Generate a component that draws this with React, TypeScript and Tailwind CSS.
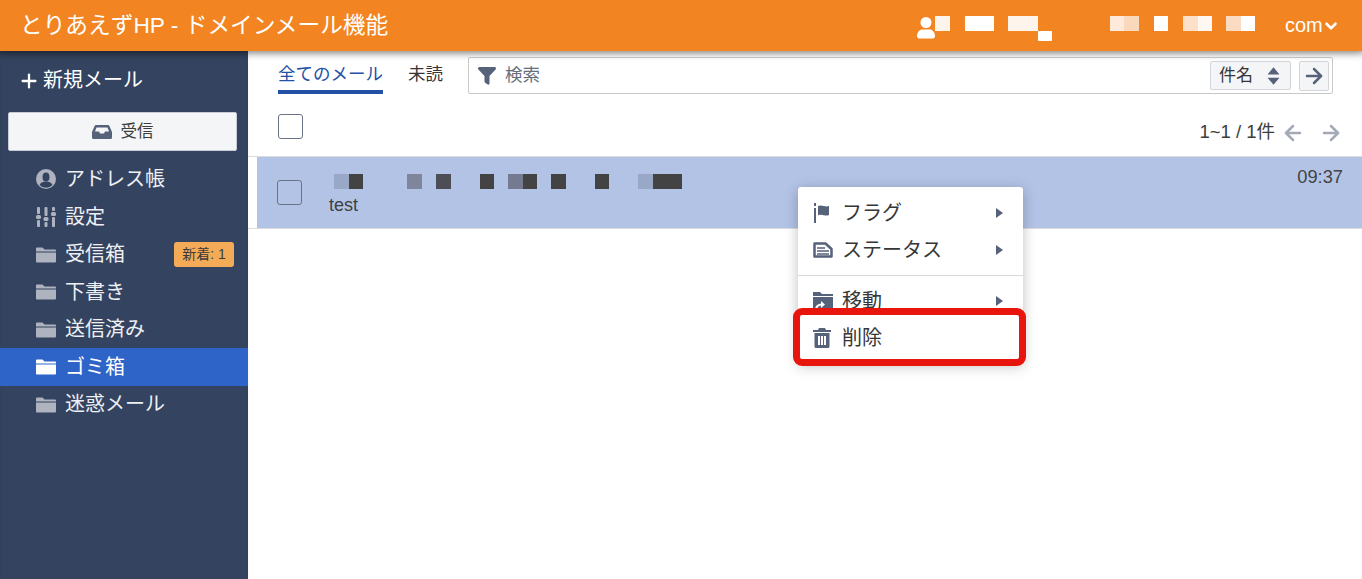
import { Plus, ChevronDown, ArrowRight, ArrowLeft } from 'lucide-react';

const font = { fontFamily: '"Liberation Sans", "Noto Sans CJK JP", sans-serif' };

// pixelated (censored) text blocks
const Cell = ({ c, w = 'w-[14.5px]' }: { c: string; w?: string }) => <span className={`block h-[15px] ${w} ${c}`} />;

const FolderIcon = ({ active }: { active?: boolean }) => (
  <svg viewBox="0 0 20 16" className="h-[17px] w-[20px]" fill={active ? '#ffffff' : '#aeb3bf'}>
    <path d="M0 2a1 1 0 0 1 1-1h5.500l2 2H19a1 1 0 0 1 1 1v1H0z" />
    <path d="M0 6h20v9a1 1 0 0 1-1 1H1a1 1 0 0 1-1-1z" />
  </svg>
);

const AddressIcon = () => (
  <svg viewBox="0 0 20 20" className="h-[20px] w-[20px]">
    <circle cx="10" cy="10" r="10" fill="#aeb3bf" />
    <ellipse cx="10" cy="8" rx="3.500" ry="4.500" fill="#34435f" />
    <path d="M3.500 16c1-2.500 3.500-3.500 6.500-3.500s5.500 1 6.500 3.500a9 9 0 0 1-13 0z" fill="#34435f" />
  </svg>
);

const SlidersIcon = () => (
  <svg viewBox="0 0 20 20" className="h-[20px] w-[20px]" fill="#aeb3bf">
    <rect x="1" y="0" width="3" height="7" rx="1" />
    <rect x="0" y="8" width="5" height="4" rx="1.500" />
    <rect x="1" y="13" width="3" height="7" rx="1" />
    <rect x="8.500" y="0" width="3" height="9" rx="1" />
    <rect x="7.500" y="10" width="5" height="4" rx="1.500" />
    <rect x="8.500" y="15" width="3" height="5" rx="1" />
    <rect x="16" y="0" width="3" height="4" rx="1" />
    <rect x="15" y="5" width="5" height="4" rx="1.500" />
    <rect x="16" y="10" width="3" height="10" rx="1" />
  </svg>
);

const SideRow = ({ icon, label, active, badge }: { icon: React.ReactNode; label: string; active?: boolean; badge?: string }) => (
  <div className={`flex h-[37.5px] items-center pl-[36px] pr-[14px] text-[20px] ${active ? 'bg-[#2e64c8] text-white' : 'text-[#eef0f4]'}`}>
    <span className="flex w-[29px] shrink-0">{icon}</span>
    <span className="flex-1 whitespace-nowrap">{label}</span>
    {badge && <span className="flex h-[25px] w-[60px] items-center justify-center rounded-[3px] bg-[#f4ab58] text-[14px] text-[#3b3b3b]">{badge}</span>}
  </div>
);

const MenuItem = ({ icon, label, arrow = true }: { icon: React.ReactNode; label: string; arrow?: boolean }) => (
  <div className="flex h-[37.5px] items-center pl-[15px] pr-[20px] text-[20px] text-[#363636]">
    <span className="flex w-[29px] shrink-0">{icon}</span>
    <span className="flex-1">{label}</span>
    {arrow && <span className="h-0 w-0 border-y-[5px] border-l-[7px] border-y-transparent border-l-[#56617a]" />}
  </div>
);

export default function App() {
  return (
    <div className="flex h-[579px] w-[1362px] flex-col overflow-hidden bg-white" style={font}>
      <header className="relative z-10 flex h-[51px] shrink-0 items-center bg-[#f28522] pl-[20px] text-white shadow-[0_2px_8px_rgba(0,0,0,0.3)]">
        <h1 className="w-[897px] whitespace-nowrap text-[22.700px]">とりあえずHP - ドメインメール機能</h1>
        <svg viewBox="0 0 18 22" className="mt-[4px] h-[22px] w-[18px]" fill="#ffffff">
          <circle cx="9" cy="5.500" r="5.500" />
          <path d="M0 19c0-4 3-6.500 5-6.500h8c2 0 5 2.500 5 6.500 0 1.500-1 2.500-2 2.500H2c-1 0-2-1-2-2.500z" />
        </svg>
        <div className="mb-[4px] flex">
          <Cell c="bg-[#fef4ec]" />
          <Cell c="ml-[15px] bg-white" w="w-[29px]" />
          <div className="relative ml-[14px]">
            <Cell c="bg-[#fef4ec]" w="w-[30px]" />
            <span className="absolute left-[30px] top-[15px] block h-[10px] w-[14px] bg-white" />
          </div>
          <Cell c="ml-[72px] bg-[#fdeadb]" />
          <Cell c="bg-[#fad8bb]" />
          <Cell c="ml-[15px] bg-white" />
          <Cell c="ml-[15px] bg-[#fce0c8]" />
          <Cell c="bg-[#fff8f2]" />
          <Cell c="ml-[14px] bg-[#fbdcc2]" />
          <Cell c="bg-white" />
        </div>
        <span className="mb-[2px] ml-[30px] text-[20px]">com</span>
        <ChevronDown className="-ml-[1px] mt-[1px] h-[18px] w-[18px]" strokeWidth={3.500} />
      </header>

      <div className="relative flex flex-1">
        <aside className="flex w-[248px] shrink-0 flex-col bg-[#34435f] shadow-[inset_0_6px_6px_-4px_rgba(0,0,0,0.3)]">
          <div className="flex h-[61px] items-center pb-[4px] pl-[18px] text-[20px] text-white">
            <Plus className="mr-[3px] mt-[3px] h-[22px] w-[22px]" strokeWidth={2.500} />
            新規メール
          </div>
          <button className="mx-[8px] flex h-[39px] w-[229px] items-center justify-center rounded-[2px] border border-[#c8ccd4] bg-[#f4f5f7] text-[16.500px] text-[#3e3e3e]">
            <svg viewBox="0 0 20 14" className="mr-[9px] h-[14px] w-[20px]" fill="#56617a">
              <path d="M4 0h12a1.500 1.500 0 0 1 1.400 1L20 7v5.500a1.500 1.500 0 0 1-1.500 1.500h-17A1.500 1.500 0 0 1 0 12.500V7l2.600-6A1.500 1.500 0 0 1 4 0zM4.500 2.500 3 6.500h4l1 2h4l1-2h4l-1.500-4z" fillRule="evenodd" />
            </svg>
            受信
          </button>
          <nav className="mt-[9.500px]">
            <SideRow icon={<AddressIcon />} label="アドレス帳" />
            <SideRow icon={<SlidersIcon />} label="設定" />
            <SideRow icon={<FolderIcon />} label="受信箱" badge="新着: 1" />
            <SideRow icon={<FolderIcon />} label="下書き" />
            <SideRow icon={<FolderIcon />} label="送信済み" />
            <SideRow icon={<FolderIcon active />} label="ゴミ箱" active />
            <SideRow icon={<FolderIcon />} label="迷惑メール" />
          </nav>
        </aside>

        <main className="flex min-w-0 flex-1 flex-col shadow-[inset_0_6px_6px_-4px_rgba(0,0,0,0.25)]">
          <div className="flex h-[43px] items-end pl-[30px] pr-[29px]">
            <div className="flex h-[37px] w-[105px] items-center justify-center whitespace-nowrap border-b-[4px] border-[#2450a6] pt-[2px] text-[17.500px] text-[#2450a6]">全てのメール</div>
            <div className="ml-[25px] flex h-[37px] items-center pb-[2px] text-[17.500px] text-[#363636]">未読</div>
            <div className="ml-[25px] flex h-[37px] flex-1 items-center rounded-[2px] border border-[#c9c9c9] pl-[9px] pr-[3px]">
              <svg viewBox="0 0 18 18" className="h-[18px] w-[18px]" fill="#56617a">
                <path d="M0 1.500C0 .7.700 0 1.500 0h15c.8 0 1.500.7 1.500 1.500 0 .4-.2.8-.4 1L11.500 9v7.500c0 1-1 1.500-1.800 1l-2.500-1.800c-.4-.3-.7-.7-.7-1.200V9L.4 2.500C.2 2.300 0 1.900 0 1.500z" />
              </svg>
              <span className="ml-[9px] flex-1 text-[17.500px] text-[#666e7d]">検索</span>
              <div className="flex h-[29px] w-[81px] items-center justify-between rounded-[2px] border border-[#d2d5da] bg-[#f4f5f7] pl-[8px] pr-[10px] text-[17px] text-[#363636]">
                件名
                <svg viewBox="0 0 12 16" className="h-[18px] w-[13px]" fill="#56617a">
                  <path d="M6 0l5.500 6.500H.5zM6 16L.5 9.500h11z" />
                </svg>
              </div>
              <div className="ml-[8px] flex h-[30px] w-[30px] items-center justify-center rounded-[2px] border border-[#d2d5da] bg-[#f4f5f7]">
                <ArrowRight className="h-[24px] w-[24px] text-[#56617a]" strokeWidth={2.500} />
              </div>
            </div>
          </div>

          <div className="flex h-[62px] items-start pl-[30px] pr-[19px]">
            <span className="mt-[20px] h-[25px] w-[25px] rounded-[3px] border border-[#6b7487] bg-white" />
            <span className="ml-auto mt-[24px] text-[18.500px] text-[#3c3c3c]">1~1 / 1件</span>
            <ArrowLeft className="ml-[6px] mt-[27px] h-[24px] w-[24px] text-[#a3a9b5]" strokeWidth={2.500} />
            <ArrowRight className="ml-[14px] mt-[27px] h-[24px] w-[24px] text-[#a3a9b5]" strokeWidth={2.500} />
          </div>

          <div className="flex h-[73px] border-y border-[#dcdcdc]">
            <div className="w-[9px] shrink-0 bg-white" />
            <div className="flex flex-1 bg-[#b3c3e6] pl-[20px] pr-[19px]">
              <span className="mt-[23px] h-[25px] w-[25px] rounded-[3px] border border-[#6b7487]" />
              <div className="ml-[27px] mt-[17px]">
                <div className="ml-[5px] flex">
                  <Cell c="bg-[#9aa8c8]" />
                  <Cell c="bg-[#434343]" />
                  <Cell c="ml-[44px] bg-[#7f869c]" />
                  <Cell c="bg-[#b3c3e6]" />
                  <Cell c="bg-[#4d4e55]" />
                  <Cell c="ml-[29px] bg-[#434343]" />
                  <Cell c="ml-[14px] bg-[#747b90]" />
                  <Cell c="bg-[#434343]" />
                  <Cell c="ml-[14px] bg-[#434343]" />
                  <Cell c="ml-[29px] bg-[#434343]" />
                  <Cell c="ml-[29px] bg-[#9aa8c8]" />
                  <Cell c="bg-[#434343]" w="w-[29px]" />
                </div>
                <div className="mt-[3px] text-[18px] leading-[26px] text-[#3f3f3f]">test</div>
              </div>
              <span className="ml-auto mt-[10px] text-[18.300px] leading-[20px] text-[#444444]">09:37</span>
            </div>
          </div>
        </main>

        {/* context menu */}
        <div className="absolute left-[798px] top-[136px] h-[176px] w-[225px] rounded-[3px] bg-white py-[7px] shadow-[0_3px_14px_rgba(0,0,0,0.25)]">
          <MenuItem
            label="フラグ"
            icon={
              <svg viewBox="0 0 18 20" className="h-[20px] w-[18px]" fill="#56617a">
                <rect x="1" y="0" width="2" height="3" />
                <rect x="1" y="5" width="2" height="15" />
                <path d="M5 3c2-1 4-.5 6 0s3 .5 5 0v9c-2 .8-3 .7-5 .2s-4-.8-6 0z" />
              </svg>
            }
          />
          <MenuItem
            label="ステータス"
            icon={
              <svg viewBox="0 0 20 16" className="h-[16px] w-[20px]">
                <path d="M1.500 1.500h11l6 5.500v7.500h-17z" fill="none" stroke="#56617a" strokeWidth="2.500" strokeLinejoin="round" />
                <path d="M4 6h8M4 9h12M4 12h12" stroke="#56617a" strokeWidth="1.500" />
              </svg>
            }
          />
          <div className="mt-[6px] border-t border-[#d8d8d8] pt-[6px]">
            <MenuItem
              label="移動"
              icon={
                <svg viewBox="0 0 20 18" className="h-[18px] w-[20px]">
                  <path d="M0 0h7l2 2h11v2H0z" fill="#56617a" />
                  <path d="M0 5h20v13H0z" fill="#56617a" />
                  <path d="M3 18c0-3.500 2-5.500 6-5.500" fill="none" stroke="#ffffff" strokeWidth="2" />
                  <path d="M8 9l4 3.500L8 16z" fill="#ffffff" />
                </svg>
              }
            />
            <MenuItem
              label="削除"
              arrow={false}
              icon={
                <svg viewBox="0 0 18 20" className="h-[20px] w-[18px]" fill="#56617a">
                  <path d="M6 0h6l1 2h5v2H0V2h5z" />
                  <path d="M1.500 5h15v13.500a1.500 1.500 0 0 1-1.500 1.500H3a1.500 1.500 0 0 1-1.500-1.500zM5 8v9h2V8zm3 0v9h2V8zm3 0v9h2V8z" fillRule="evenodd" />
                </svg>
              }
            />
          </div>
          {/* red highlight */}
          <div className="absolute left-[-5px] top-[121px] h-[58px] w-[233px] rounded-[9px] border-[7px] border-[#e8150d]" />
        </div>
      </div>
    </div>
  );
}
